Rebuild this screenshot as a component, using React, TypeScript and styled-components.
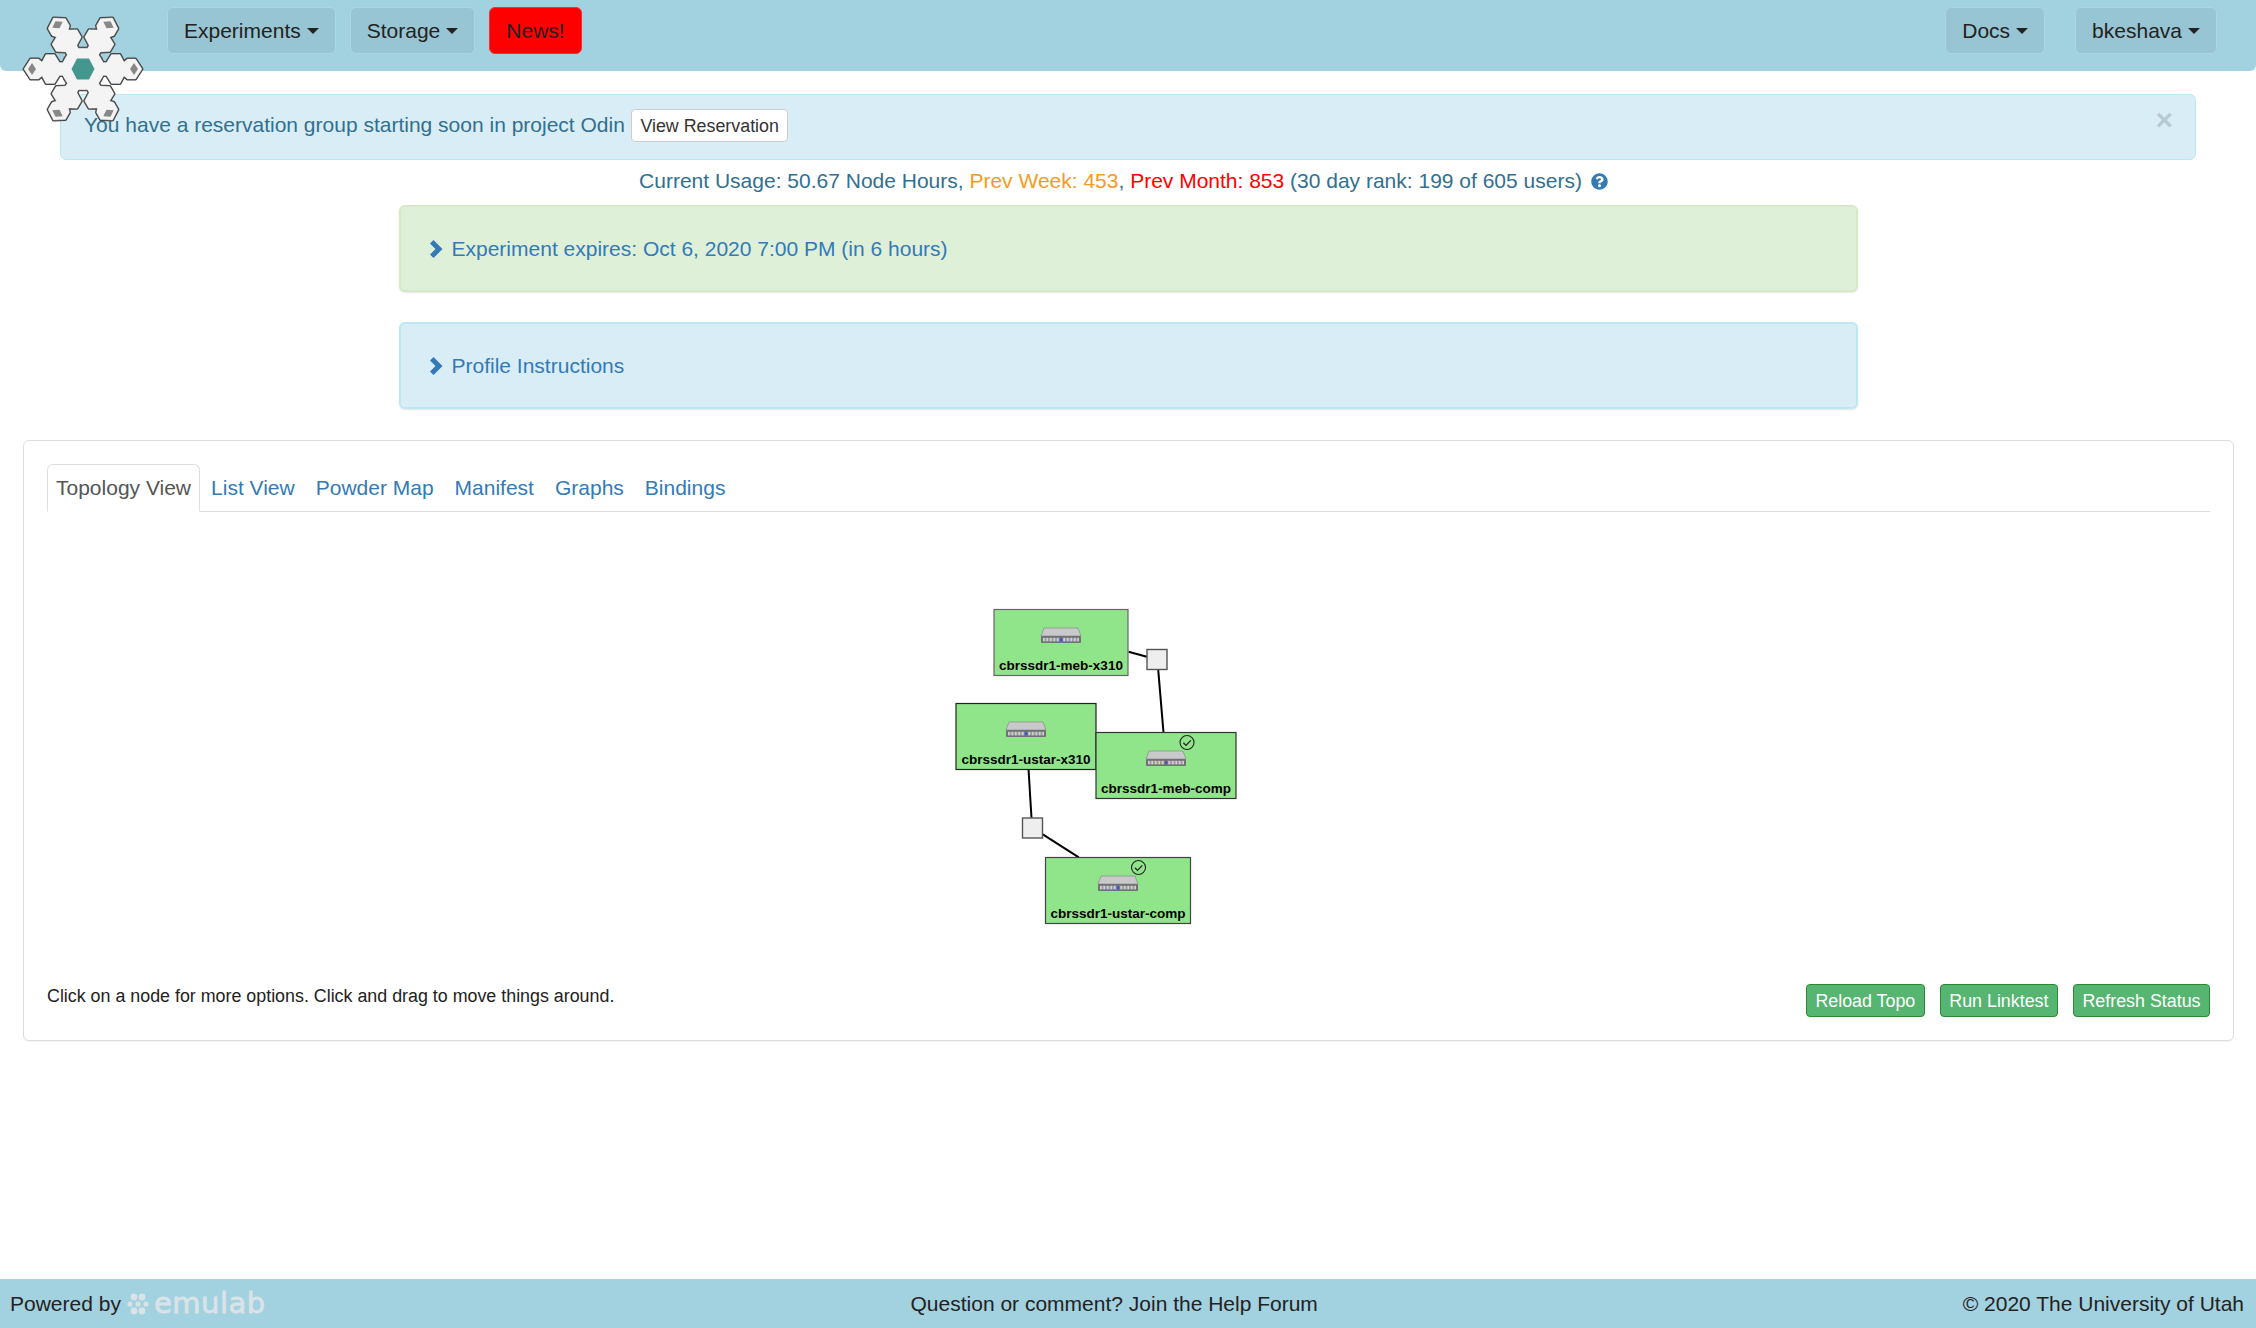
import React from 'react';
import styled, { createGlobalStyle } from 'styled-components';
import { FaQuestionCircle } from 'react-icons/fa';

const GlobalStyle = createGlobalStyle`
  html, body {
    margin: 0;
    padding: 0;
    background: #fff;
    font-family: "Liberation Sans", Arial, sans-serif;
    font-size: 21px;
    line-height: 30px;
    color: #333;
  }
`;

const Page = styled.div`
  min-height: 100vh;
  display: flex;
  flex-direction: column;
  position: relative;
`;

const Navbar = styled.nav`
  height: 71px;
  box-sizing: border-box;
  background: #a2d1e0;
  border-radius: 0 0 6px 6px;
  padding: 7px 39px 0 167px;
  display: flex;
  justify-content: space-between;
`;

const NavGroup = styled.div<{ $gap: number }>`
  display: flex;
  gap: ${p => p.$gap}px;
`;

const NavButton = styled.div<{ $news?: boolean }>`
  height: 47px;
  box-sizing: border-box;
  padding: 0 16px;
  display: flex;
  align-items: center;
  gap: 6px;
  color: #222;
  background: ${p => (p.$news ? '#ff0000' : '#98c5d3')};
  border: 1px solid ${p => (p.$news ? '#e8323c' : '#aed5e2')};
  border-radius: 6px;
`;

const Caret = styled.span`
  width: 0;
  height: 0;
  border-top: 6px solid #222;
  border-left: 6px solid transparent;
  border-right: 6px solid transparent;
`;

const LogoMark = styled.svg`
  position: absolute;
  left: 21px;
  top: 7px;
  z-index: 2;
`;

const Alert = styled.div`
  margin: 23px 60px 0;
  height: 66px;
  box-sizing: border-box;
  padding: 15px 23px 0;
  position: relative;
  display: flex;
  align-items: flex-start;
  gap: 6px;
  background: #d9edf7;
  border: 1px solid #bce8f1;
  border-radius: 6px;
  color: #31708f;
`;

const AlertButton = styled.div`
  height: 33px;
  margin-top: -1px;
  box-sizing: border-box;
  padding: 0 8.5px;
  display: flex;
  align-items: center;
  font-size: 17.85px;
  color: #333;
  background: #fff;
  border: 1px solid #ccc;
  border-radius: 4px;
`;

const Close = styled.span`
  position: absolute;
  right: 22px;
  top: 10px;
  font-size: 30px;
  font-weight: bold;
  color: #000;
  opacity: 0.15;
`;

const Usage = styled.div`
  margin-top: 6px;
  height: 30px;
  padding-right: 9px;
  display: flex;
  justify-content: center;
  align-items: center;
  color: #31708f;
  white-space: pre;
`;

const Prev = styled.span<{ $color: string }>`
  color: ${p => p.$color};
`;

const HelpIcon = styled(FaQuestionCircle)`
  color: #337ab7;
  font-size: 17px;
  margin-left: 9px;
`;

const Panel = styled.div<{ $tone: 'green' | 'blue' }>`
  margin: ${p => (p.$tone === 'green' ? '9px' : '30px')} auto 0;
  width: 1459px;
  height: 87px;
  box-sizing: border-box;
  padding-left: 29px;
  display: flex;
  align-items: center;
  gap: 9px;
  color: #337ab7;
  background: ${p => (p.$tone === 'green' ? '#dff0d8' : '#d9edf7')};
  border: 2px solid ${p => (p.$tone === 'green' ? '#d6e9c6' : '#bce8f1')};
  border-radius: 6px;
  box-shadow: 0 1px 2px rgba(0, 0, 0, 0.1);
`;

const Card = styled.section`
  margin: 31px 22px 0 23px;
  height: 601px;
  box-sizing: border-box;
  padding: 23px 23px 0;
  background: #fff;
  border: 1px solid #ddd;
  border-radius: 6px;
  box-shadow: 0 1px 1px rgba(0, 0, 0, 0.05);
`;

const Tabs = styled.div`
  display: flex;
  gap: 1px;
  height: 48px;
  box-sizing: border-box;
  border-bottom: 1px solid #ddd;
`;

const Tab = styled.div<{ $active?: boolean }>`
  height: 48px;
  box-sizing: border-box;
  padding: 0 ${p => (p.$active ? '8px' : '9px')};
  display: flex;
  align-items: center;
  color: ${p => (p.$active ? '#555' : '#337ab7')};
  background: ${p => (p.$active ? '#fff' : 'transparent')};
  border: 1px solid ${p => (p.$active ? '#ddd' : 'transparent')};
  border-bottom-color: ${p => (p.$active ? '#fff' : 'transparent')};
  border-radius: 6px 6px 0 0;
`;

const Canvas = styled.svg`
  display: block;
  width: 100%;
  height: 472px;
`;

const NodeLabel = styled.text`
  font-family: "Liberation Sans", Arial, sans-serif;
  font-size: 13.5px;
  font-weight: bold;
  fill: #000;
  text-anchor: middle;
`;

const ActionRow = styled.div`
  display: flex;
  justify-content: space-between;
  align-items: flex-start;
`;

const Hint = styled.div`
  font-size: 17.85px;
  line-height: 25px;
  color: #222;
`;

const Actions = styled.div`
  display: flex;
  gap: 15px;
`;

const GreenButton = styled.div`
  height: 33px;
  box-sizing: border-box;
  padding: 0 8.5px;
  display: flex;
  align-items: center;
  font-size: 17.85px;
  color: #fff;
  background: #55b571;
  border: 1px solid #2b8a2f;
  border-radius: 4px;
`;

const Footer = styled.footer`
  margin-top: auto;
  height: 49px;
  box-sizing: border-box;
  padding: 0 12px 0 10px;
  display: flex;
  justify-content: space-between;
  align-items: center;
  background: #a2d1e0;
  color: #222;
`;

const PoweredBy = styled.div`
  display: flex;
  align-items: center;
  gap: 6px;
`;

const EmulabWord = styled.span`
  font-family: "DejaVu Sans", sans-serif;
  font-size: 29px;
  line-height: 1;
  letter-spacing: 0.5px;
  color: #d9e3e8;
  -webkit-text-stroke: 0.8px #d9e3e8;
  margin-left: -1px;
`;

// one arm of the snowflake, pointing right from the centre
const armHalf: [number, number][] = [
  [0, 0], [18, 10.4], [20.2, 6.4], [23.5, 6.5], [28.5, 14.5], [37, 14.5], [41, 7], [44.5, 10], [52.5, 10], [59, 0],
];
const armPoints = [...armHalf, ...armHalf.slice(1, -1).reverse().map(([x, y]) => [x, -y])]
  .map(p => p.join(','))
  .join(' ');
const angles = [0, 60, 120, 180, 240, 300];

const Snowflake = () => (
  <LogoMark width="124" height="124" viewBox="-62 -62 124 124">
    {angles.map(a => (
      <polygon key={a} points={armPoints} transform={`rotate(${a})`} fill="#f4f4f4" stroke="#444" strokeWidth="3" strokeLinejoin="round" />
    ))}
    <circle r="19" fill="#f4f4f4" />
    {angles.map(a => (
      <g key={a} transform={`rotate(${a})`}>
        <polygon points={armPoints} fill="#f4f4f4" stroke="#f4f4f4" strokeWidth="0.3" />
        <polygon points="47,0 51,-6 55,0 51,6" fill="#888" />
      </g>
    ))}
    <polygon points="-11.5,0 -6,-10.5 6,-10.5 11.5,0 6,10.5 -6,10.5" fill="#45968f" />
  </LogoMark>
);

const Chevron = () => (
  <svg width="13" height="18" viewBox="0 0 13 18">
    <polygon points="0,3.5 3.5,0 12.5,9 3.5,18 0,14.5 5.5,9" fill="#337ab7" />
  </svg>
);

const Flower = () => (
  <svg width="22" height="22" viewBox="0 0 22 22">
    <g fill="#d9e3e8">
      <circle cx="7" cy="4" r="3.4" />
      <circle cx="15" cy="4" r="3.4" />
      <circle cx="3" cy="11" r="2.6" />
      <circle cx="11" cy="11" r="2.6" />
      <circle cx="19" cy="11" r="2.6" />
      <circle cx="7" cy="18" r="3.4" />
      <circle cx="15" cy="18" r="3.4" />
    </g>
  </svg>
);

const ventXs = Array.from({ length: 12 }, (_, i) => i);

const Chassis = ({ cx, y }: { cx: number; y: number }) => (
  <g transform={`translate(${cx - 20} ${y})`}>
    <polygon points="3,0 37,0 40,8 0,8" fill="#c9c9cb" stroke="#8a8a8a" strokeWidth="0.7" />
    <rect x="0" y="8" width="40" height="7" rx="1" fill="#6f7175" />
    {ventXs.map(i => (
      <React.Fragment key={i}>
        <rect x={2 + i * 1.4} y="9.8" width="0.8" height="3.6" fill="#e8e8e8" />
        <rect x={21.8 + i * 1.4} y="9.8" width="0.8" height="3.6" fill="#e8e8e8" />
      </React.Fragment>
    ))}
    <rect x="18.8" y="10.2" width="2.6" height="2.8" fill="#3a55d8" />
  </g>
);

const Check = ({ cx, cy }: { cx: number; cy: number }) => (
  <g fill="none" stroke="#222">
    <circle cx={cx} cy={cy} r="7" strokeWidth="1.1" />
    <path d={`M${cx - 3.6} ${cy + 0.3}l2.6 2.6l4.8 -5`} strokeWidth="1.3" />
  </g>
);

interface TopoNode {
  name: string;
  x: number;
  y: number;
  w: number;
  h: number;
  border: string;
  checkX?: number;
}

const nodes: TopoNode[] = [
  { name: 'cbrssdr1-meb-x310', x: 993.5, y: 609.5, w: 134, h: 66, border: '#666' },
  { name: 'cbrssdr1-ustar-x310', x: 955.5, y: 703.5, w: 140, h: 66, border: '#222' },
  { name: 'cbrssdr1-meb-comp', x: 1095.5, y: 732.5, w: 140, h: 66, border: '#333', checkX: 1186.5 },
  { name: 'cbrssdr1-ustar-comp', x: 1045, y: 857.5, w: 145, h: 66, border: '#444', checkX: 1138 },
];

const links = [
  [1128, 651.7, 1146.3, 656.7],
  [1157.7, 669.7, 1163, 732.7],
  [1028, 769.3, 1031, 817.7],
  [1042.3, 834.3, 1078.3, 857.3],
];

const switches = [
  [1146.5, 649.5],
  [1022, 818],
];

const Topology = () => (
  <Canvas viewBox="47 512 2162 472">
    {links.map(([x1, y1, x2, y2]) => (
      <line key={x1} x1={x1} y1={y1} x2={x2} y2={y2} stroke="#000" strokeWidth="2" />
    ))}
    {switches.map(([x, y]) => (
      <rect key={x} x={x} y={y} width="20" height="20" fill="#eee" stroke="#555" strokeWidth="1.4" />
    ))}
    {nodes.map(n => (
      <g key={n.name}>
        <rect x={n.x} y={n.y} width={n.w} height={n.h} fill="#90e58a" stroke={n.border} strokeWidth="1.2" />
        <Chassis cx={n.x + n.w / 2} y={n.y + 18.5} />
        <NodeLabel x={n.x + n.w / 2} y={n.y + 60.5}>{n.name}</NodeLabel>
        {n.checkX && <Check cx={n.checkX} cy={n.y + 10} />}
      </g>
    ))}
  </Canvas>
);

const App = () => (
  <Page>
    <GlobalStyle />
    <Navbar>
      <NavGroup $gap={14}>
        <NavButton>Experiments <Caret /></NavButton>
        <NavButton>Storage <Caret /></NavButton>
        <NavButton $news>News!</NavButton>
      </NavGroup>
      <NavGroup $gap={30}>
        <NavButton>Docs <Caret /></NavButton>
        <NavButton>bkeshava <Caret /></NavButton>
      </NavGroup>
    </Navbar>
    <Snowflake />
    <Alert>
      You have a reservation group starting soon in project Odin
      <AlertButton>View Reservation</AlertButton>
      <Close>×</Close>
    </Alert>
    <Usage>
      <span>
        Current Usage: 50.67 Node Hours, <Prev $color="#f79a1e">Prev Week: 453</Prev>, <Prev $color="#f00">Prev Month: 853</Prev> (30 day rank: 199 of 605 users)
      </span>
      <HelpIcon />
    </Usage>
    <Panel $tone="green"><Chevron />Experiment expires: Oct 6, 2020 7:00 PM (in 6 hours)</Panel>
    <Panel $tone="blue"><Chevron />Profile Instructions</Panel>
    <Card>
      <Tabs>
        <Tab $active>Topology View</Tab>
        <Tab>List View</Tab>
        <Tab>Powder Map</Tab>
        <Tab>Manifest</Tab>
        <Tab>Graphs</Tab>
        <Tab>Bindings</Tab>
      </Tabs>
      <Topology />
      <ActionRow>
        <Hint>Click on a node for more options. Click and drag to move things around.</Hint>
        <Actions>
          <GreenButton>Reload Topo</GreenButton>
          <GreenButton>Run Linktest</GreenButton>
          <GreenButton>Refresh Status</GreenButton>
        </Actions>
      </ActionRow>
    </Card>
    <Footer>
      <PoweredBy>
        Powered by
        <Flower />
        <EmulabWord>emulab</EmulabWord>
      </PoweredBy>
      <div>Question or comment? Join the Help Forum</div>
      <div>© 2020 The University of Utah</div>
    </Footer>
  </Page>
);

export default App;
